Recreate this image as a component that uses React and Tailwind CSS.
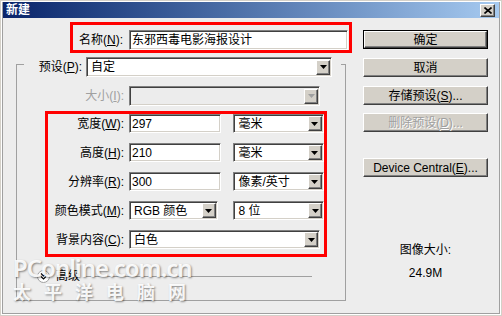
import React from 'react'

const FONT = "font-['Liberation_Sans','Noto_Sans_CJK_SC',sans-serif]"

// sunken 3D edge used by text boxes and combo boxes
const SUNKEN =
  'border border-t-[#808080] border-l-[#808080] border-b-white border-r-white shadow-[inset_1px_1px_0_#404040,inset_-1px_-1px_0_#d4d0c8]'
const RAISED =
  'border border-t-white border-l-white border-b-[#404040] border-r-[#404040] shadow-[inset_-1px_-1px_0_#808080]'

function Label({ w, children, disabled }) {
  return (
    <div
      className={`shrink-0 text-right text-[12px] leading-none ${disabled ? 'text-[#a0a0a0]' : 'text-black'}`}
      style={{ width: w }}
    >
      {children}
    </div>
  )
}

function Key({ k }) {
  return (
    <>
      (<span className="underline underline-offset-1">{k}</span>):
    </>
  )
}

function Field({ value, w, h = 19 }) {
  return (
    <div
      className={`${SUNKEN} flex items-center bg-white pl-[2px] text-[12px] leading-none text-black`}
      style={{ width: w, height: h }}
    >
      {value}
    </div>
  )
}

function Arrow({ disabled }) {
  return (
    <div className={`${RAISED} flex h-[15px] w-[14px] shrink-0 items-center justify-center bg-[#d4d0c8]`}>
      <svg width="7" height="4" viewBox="0 0 7 4">
        <path d="M0 0h7L3.5 4z" fill={disabled ? '#a0a0a0' : '#000'} />
      </svg>
    </div>
  )
}

function Select({ value, w, h = 19, disabled }) {
  return (
    <div
      className={`${SUNKEN} flex items-center pl-[4px] pr-[1px] text-[12px] leading-none text-black ${disabled ? 'bg-[#ececec]' : 'bg-white'}`}
      style={{ width: w, height: h }}
    >
      <span className="flex-1">{value}</span>
      <Arrow disabled={disabled} />
    </div>
  )
}

function Button({ children, isDefault, disabled, className = '' }) {
  return (
    <div className={`h-[19px] w-[125px] ${isDefault ? 'border border-black' : ''} ${className}`}>
      <div
        className={`${RAISED} flex h-full w-full items-center justify-center bg-[#d4d0c8] text-[12px] leading-none ${disabled ? 'text-[#a0a0a0] [text-shadow:1px_1px_0_#fff]' : 'text-black'}`}
      >
        {children}
      </div>
    </div>
  )
}

function Row({ label, children }) {
  return (
    <div className="flex h-[19px] items-center gap-[5px]">
      <Label w={76}>{label}</Label>
      {children}
    </div>
  )
}

export default function App() {
  return (
    <div
      className={`${FONT} relative flex h-[316px] w-[502px] flex-col overflow-hidden bg-[#ededed] shadow-[inset_0_0_0_1px_#d4d0c8,inset_0_0_0_2px_#ffffff,inset_0_0_0_3px_#a0a0a0]`}
    >
      {/* Title bar */}
      <div className="mx-[3px] mt-[2px] flex h-[16px] items-center justify-between bg-gradient-to-r from-[#0a246a] to-[#a6caf0] pl-[3px] pr-[4px]">
        <span className="text-[12px] font-bold leading-none text-white">新建</span>
        <div className={`${RAISED} flex h-[13px] w-[15px] items-center justify-center bg-[#d4d0c8]`}>
          <svg width="8" height="7" viewBox="0 0 8 7">
            <path d="M0.5 0.5l7 6M7.5 0.5l-7 6" stroke="#000" strokeWidth="1.6" />
          </svg>
        </div>
      </div>

      <div className="flex items-start">
        {/* Left column */}
        <div className="flex w-[357px] flex-col">
          {/* Name */}
          <div className="ml-[70px] mt-[4px] flex h-[31px] w-[282px] items-center gap-[6px] border-[3px] border-[#ff0000] pt-[5px]">
            <Label w={50}>
              名称<Key k="N" />
            </Label>
            <Field value="东邪西毒电影海报设计" w={219} h={20} />
          </div>

          {/* Group box */}
          <div className="ml-[16px] mt-[4px] flex w-[330px] flex-col">
            <div className="flex h-[20px]">
              <div className="mt-[7px] w-[8px] border-l border-t border-[#a0a0a0]" />
              <div className="flex w-[317px] items-center gap-[4px]">
                <Label w={58}>
                  预设<Key k="P" />
                </Label>
                <Select value="自定" w={246} h={20} />
              </div>
              <div className="mt-[7px] w-[5px] border-r border-t border-[#a0a0a0]" />
            </div>

            <div className="flex h-[224px] flex-col border-b border-l border-r border-[#a0a0a0]">
              <div className="mt-[9px] flex h-[20px] items-center gap-[5px]">
                <Label w={107} disabled>
                  大小<Key k="I" />
                </Label>
                <Select value="" w={191} h={20} disabled />
              </div>

              {/* Size settings */}
              <div className="ml-[28px] mt-[5px] flex w-[282px] flex-col gap-[10px] border-[3px] border-[#ff0000] pb-[5px]">
                <Row label={<>宽度<Key k="W" /></>}>
                  <Field value="297" w={93} />
                  <div className="w-[2px]" />
                  <Select value="毫米" w={91} />
                </Row>
                <Row label={<>高度<Key k="H" /></>}>
                  <Field value="210" w={93} />
                  <div className="w-[2px]" />
                  <Select value="毫米" w={91} />
                </Row>
                <Row label={<>分辨率<Key k="R" /></>}>
                  <Field value="300" w={93} />
                  <div className="w-[2px]" />
                  <Select value="像素/英寸" w={91} />
                </Row>
                <Row label={<>颜色模式<Key k="M" /></>}>
                  <Select value="RGB 颜色" w={89} />
                  <div className="w-[6px]" />
                  <Select value="8 位" w={91} />
                </Row>
                <Row label={<>背景内容<Key k="C" /></>}>
                  <Select value="白色" w={191} />
                </Row>
              </div>

              {/* Advanced */}
              <div className="ml-[20px] mr-[33px] mt-[12px] flex h-[14px] items-center">
                <div className="flex h-[13px] w-[13px] items-center justify-center rounded-full border border-[#a0a0a0] bg-white">
                  <svg width="7" height="7" viewBox="0 0 7 7">
                    <path d="M1 0.5l2.5 2.5L6 0.5M1 3.5l2.5 2.5L6 3.5" stroke="#000" fill="none" strokeWidth="1.2" />
                  </svg>
                </div>
                <span className="ml-[6px] text-[12px] leading-none text-black">高级</span>
                <div className="ml-[4px] flex-1 border-t border-[#a0a0a0]" />
              </div>
            </div>
          </div>
        </div>

        {/* Right column */}
        <div className="ml-[6px] flex flex-col">
          <Button isDefault className="mt-[12px]">确定</Button>
          <Button className="mt-[9px]">取消</Button>
          <Button className="mt-[9px]">
            存储预设(<span className="underline underline-offset-1">S</span>)...
          </Button>
          <Button className="mt-[8px]" disabled>
            删除预设(<span className="underline underline-offset-1">D</span>)...
          </Button>
          <Button className="mt-[26px]">
            Device Central(<span className="underline underline-offset-1">E</span>)...
          </Button>
          <div className="mt-[67px] text-center text-[12px] leading-none text-black">图像大小:</div>
          <div className="mt-[11px] text-center text-[12px] leading-none text-black">24.9M</div>
        </div>
      </div>

      {/* Watermark */}
      <div className="pointer-events-none absolute left-[13px] top-[253px] flex flex-col font-['Noto_Sans','Noto_Sans_CJK_SC',sans-serif] text-white/90 [text-shadow:1px_1px_2px_rgba(0,0,0,0.45)]">
        <span className="text-[24px] font-semibold leading-[29px] tracking-[-1px]">PConline.com.cn</span>
        <span className="text-[18px] font-semibold leading-[20px] tracking-[13px]">太平洋电脑网</span>
      </div>
    </div>
  )
}
